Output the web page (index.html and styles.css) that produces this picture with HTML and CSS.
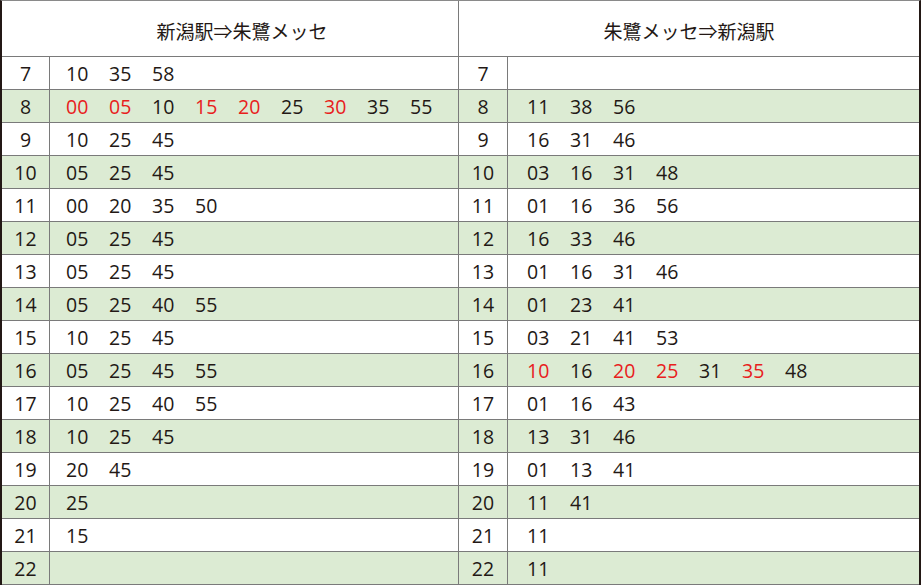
FILE: index.html
```html
<!DOCTYPE html>
<html lang="ja">
<head>
<meta charset="utf-8">
<title>時刻表</title>
<link rel="stylesheet" href="styles.css">
</head>
<body>
<div class="timetable">
  <div class="head head-left">新潟駅⇒朱鷺メッセ</div>
  <div class="head head-right">朱鷺メッセ⇒新潟駅</div>

  <div class="hour">7</div><div class="mins mins-l"><span>10</span><span>35</span><span>58</span></div>
  <div class="hour">7</div><div class="mins mins-r"></div>

  <div class="hour g">8</div><div class="mins mins-l g"><span class="r">00</span><span class="r">05</span><span>10</span><span class="r">15</span><span class="r">20</span><span>25</span><span class="r">30</span><span>35</span><span>55</span></div>
  <div class="hour g">8</div><div class="mins mins-r g"><span>11</span><span>38</span><span>56</span></div>

  <div class="hour">9</div><div class="mins mins-l"><span>10</span><span>25</span><span>45</span></div>
  <div class="hour">9</div><div class="mins mins-r"><span>16</span><span>31</span><span>46</span></div>

  <div class="hour g">10</div><div class="mins mins-l g"><span>05</span><span>25</span><span>45</span></div>
  <div class="hour g">10</div><div class="mins mins-r g"><span>03</span><span>16</span><span>31</span><span>48</span></div>

  <div class="hour">11</div><div class="mins mins-l"><span>00</span><span>20</span><span>35</span><span>50</span></div>
  <div class="hour">11</div><div class="mins mins-r"><span>01</span><span>16</span><span>36</span><span>56</span></div>

  <div class="hour g">12</div><div class="mins mins-l g"><span>05</span><span>25</span><span>45</span></div>
  <div class="hour g">12</div><div class="mins mins-r g"><span>16</span><span>33</span><span>46</span></div>

  <div class="hour">13</div><div class="mins mins-l"><span>05</span><span>25</span><span>45</span></div>
  <div class="hour">13</div><div class="mins mins-r"><span>01</span><span>16</span><span>31</span><span>46</span></div>

  <div class="hour g">14</div><div class="mins mins-l g"><span>05</span><span>25</span><span>40</span><span>55</span></div>
  <div class="hour g">14</div><div class="mins mins-r g"><span>01</span><span>23</span><span>41</span></div>

  <div class="hour">15</div><div class="mins mins-l"><span>10</span><span>25</span><span>45</span></div>
  <div class="hour">15</div><div class="mins mins-r"><span>03</span><span>21</span><span>41</span><span>53</span></div>

  <div class="hour g">16</div><div class="mins mins-l g"><span>05</span><span>25</span><span>45</span><span>55</span></div>
  <div class="hour g">16</div><div class="mins mins-r g"><span class="r">10</span><span>16</span><span class="r">20</span><span class="r">25</span><span>31</span><span class="r">35</span><span>48</span></div>

  <div class="hour">17</div><div class="mins mins-l"><span>10</span><span>25</span><span>40</span><span>55</span></div>
  <div class="hour">17</div><div class="mins mins-r"><span>01</span><span>16</span><span>43</span></div>

  <div class="hour g">18</div><div class="mins mins-l g"><span>10</span><span>25</span><span>45</span></div>
  <div class="hour g">18</div><div class="mins mins-r g"><span>13</span><span>31</span><span>46</span></div>

  <div class="hour">19</div><div class="mins mins-l"><span>20</span><span>45</span></div>
  <div class="hour">19</div><div class="mins mins-r"><span>01</span><span>13</span><span>41</span></div>

  <div class="hour g">20</div><div class="mins mins-l g"><span>25</span></div>
  <div class="hour g">20</div><div class="mins mins-r g"><span>11</span><span>41</span></div>

  <div class="hour">21</div><div class="mins mins-l"><span>15</span></div>
  <div class="hour">21</div><div class="mins mins-r"><span>11</span></div>

  <div class="hour g">22</div><div class="mins mins-l g"></div>
  <div class="hour g">22</div><div class="mins mins-r g"><span>11</span></div>
</div>
</body>
</html>
```

FILE: styles.css
```css
html, body {
  margin: 0;
  padding: 0;
  background: #ffffff;
}

.timetable {
  display: grid;
  grid-template-columns: 48px 409px 49px 411px;
  grid-template-rows: 56px repeat(16, 33px);
  width: 921px;
  box-sizing: border-box;
  border-left: 2px solid #231815;
  border-right: 2px solid #231815;
  border-top: 1px solid #8a8a8a;
  font-family: "Open Sans", "Noto Sans CJK JP", sans-serif;
  font-size: 19.5px;
  color: #231815;
}

.timetable > div {
  box-sizing: border-box;
  border-bottom: 1px solid #7a7a7a;
  display: flex;
  align-items: center;
}

.head {
  grid-column: span 2;
  justify-content: center;
  font-family: "Noto Sans CJK JP", sans-serif;
  font-size: 19px;
  padding-top: 4px;
}

.head-left {
  border-right: 1px solid #7a7a7a;
  padding-left: 24px;
}

.hour {
  justify-content: center;
  border-right: 1px solid #7a7a7a;
  padding-top: 1px;
}

.mins {
  padding-left: 16px;
  padding-top: 1px;
}

.mins-l {
  border-right: 1px solid #7a7a7a;
}

.mins-r {
  padding-left: 19px;
}

.mins span {
  display: inline-block;
  width: 43px;
  flex: none;
}

.g {
  background: #dcebd3;
}

.r {
  color: #e8201c;
}
```
